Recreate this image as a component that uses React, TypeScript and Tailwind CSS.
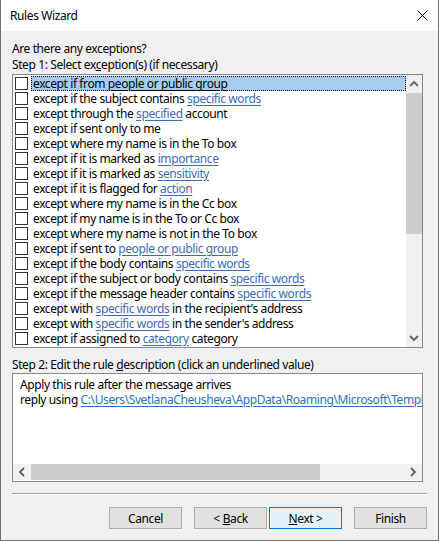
import React from "react";

type Seg = { t: string; link?: boolean };

const rows: Seg[][] = [
  [{ t: "except if from " }, { t: "people or public group", link: true }],
  [{ t: "except if the subject contains " }, { t: "specific words", link: true }],
  [{ t: "except through the " }, { t: "specified", link: true }, { t: " account" }],
  [{ t: "except if sent only to me" }],
  [{ t: "except where my name is in the To box" }],
  [{ t: "except if it is marked as " }, { t: "importance", link: true }],
  [{ t: "except if it is marked as " }, { t: "sensitivity", link: true }],
  [{ t: "except if it is flagged for " }, { t: "action", link: true }],
  [{ t: "except where my name is in the Cc box" }],
  [{ t: "except if my name is in the To or Cc box" }],
  [{ t: "except where my name is not in the To box" }],
  [{ t: "except if sent to " }, { t: "people or public group", link: true }],
  [{ t: "except if the body contains " }, { t: "specific words", link: true }],
  [{ t: "except if the subject or body contains " }, { t: "specific words", link: true }],
  [{ t: "except if the message header contains " }, { t: "specific words", link: true }],
  [{ t: "except with " }, { t: "specific words", link: true }, { t: " in the recipient's address" }],
  [{ t: "except with " }, { t: "specific words", link: true }, { t: " in the sender's address" }],
  [{ t: "except if assigned to " }, { t: "category", link: true }, { t: " category" }],
];

function Chevron({ dir }: { dir: "up" | "down" | "left" | "right" }) {
  const pts = {
    up: "1,6 5,2 9,6",
    down: "1,2 5,6 9,2",
    left: "6,1 2,5 6,9",
    right: "2,1 6,5 2,9",
  }[dir];
  const vertical = dir === "up" || dir === "down";
  return (
    <svg width={vertical ? 10 : 8} height={vertical ? 8 : 10} viewBox={vertical ? "0 0 10 8" : "0 0 8 10"}>
      <polyline points={pts} fill="none" stroke="#606060" strokeWidth={1.8} />
    </svg>
  );
}

function Button({ children, primary }: { children: React.ReactNode; primary?: boolean }) {
  return (
    <div
      className={
        "w-[73px] h-[22px] flex items-center justify-center border text-[12px] text-black " +
        (primary ? "bg-[#e5f1fb] border-[#0078d7]" : "bg-[#e1e1e1] border-[#adadad]")
      }
    >
      {children}
    </div>
  );
}

export default function App() {
  return (
    <div
      className="w-[439px] h-[541px] flex flex-col bg-[#f0f0f0] border border-[#707070] border-t-0 text-black text-[12px] leading-[15px] tracking-[-0.4px]"
      style={{ fontFamily: '"Segoe UI", "Noto Sans", sans-serif' }}
    >
      {/* Title bar */}
      <div className="h-[31px] bg-white flex items-center justify-between pl-[9px] pr-[10px] shrink-0">
        <span className="text-[12px]">Rules Wizard</span>
        <svg width="11" height="11" viewBox="0 0 11 11">
          <path d="M0.5 0.5 L10.5 10.5 M10.5 0.5 L0.5 10.5" stroke="#000" strokeWidth={1} />
        </svg>
      </div>

      <div className="flex-1 flex flex-col pl-[11px] pr-[15px]">
        <div className="mt-[10px]">Are there any exceptions?</div>
        <div className="mt-[1px]">
          Step 1: Select ex<span className="underline">c</span>eption(s) (if necessary)
        </div>

        {/* Listbox */}
        <div className="mt-[2px] h-[274px] w-[411px] border border-[#828790] bg-white flex">
          <div className="flex-1 pt-[1px] overflow-hidden">
            {rows.map((segs, i) => (
              <div key={i} className="h-[15px] flex items-center pl-[2px]">
                <div className="w-[13px] h-[13px] border border-[#333] bg-white shrink-0" />
                <div
                  className={
                    "ml-[3px] h-[15px] flex-1 pl-[2px] whitespace-nowrap flex items-center " +
                    (i === 0 ? "bg-[#a6cdf0] outline-1 outline-dotted outline-black -outline-offset-1" : "")
                  }
                >
                  {segs.map((s, j) =>
                    s.link ? (
                      <span
                        key={j}
                        className={"underline underline-offset-2 " + (i === 0 ? "text-black" : "text-[#3b6db0]")}
                      >
                        {s.t}
                      </span>
                    ) : (
                      <span key={j} className="whitespace-pre">
                        {s.t}
                      </span>
                    )
                  )}
                </div>
              </div>
            ))}
          </div>
          {/* Vertical scrollbar */}
          <div className="w-[16px] bg-[#f0f0f0] flex flex-col">
            <div className="h-[18px] flex items-center justify-center">
              <Chevron dir="up" />
            </div>
            <div className="flex-1 flex flex-col">
              <div className="h-[141px] bg-[#cdcdcd]" />
            </div>
            <div className="h-[18px] flex items-center justify-center">
              <Chevron dir="down" />
            </div>
          </div>
        </div>

        <div className="mt-[9px]">
          Step 2: Edit the rule <span className="underline">d</span>escription (click an underlined value)
        </div>

        {/* Description box */}
        <div className="mt-[1px] h-[109px] w-[411px] border border-[#828790] bg-white flex flex-col">
          <div className="flex-1 pl-[7px] pt-[3px] overflow-hidden whitespace-nowrap">
            <div>Apply this rule after the message arrives</div>
            <div>
              reply using{" "}
              <span className="underline underline-offset-2 text-[#2f6fc0]">
                C:\Users\SvetlanaCheusheva\AppData\Roaming\Microsoft\Templates\reply.oft
              </span>
            </div>
          </div>
          <div className="h-[16px] bg-[#f0f0f0] flex items-center mb-[1px]">
            <div className="w-[18px] h-full flex items-center justify-center">
              <Chevron dir="left" />
            </div>
            <div className="w-[289px] h-full bg-[#cdcdcd]" />
            <div className="flex-1" />
            <div className="w-[18px] h-full flex items-center justify-center">
              <Chevron dir="right" />
            </div>
          </div>
        </div>

        <div className="mt-[11px] w-[415px] h-[2px] border-t border-[#a0a0a0] border-b border-b-white" />

        {/* Buttons */}
        <div className="mt-[12px] flex justify-end w-[415px]">
          <Button>Cancel</Button>
          <div className="w-[12px]" />
          <Button>
            &lt; <span className="underline ml-[3px]">B</span>ack
          </Button>
          <div className="w-[2px]" />
          <Button primary>
            <span className="underline">N</span>ext &gt;
          </Button>
          <div className="w-[12px]" />
          <Button>Finish</Button>
        </div>
      </div>
    </div>
  );
}
